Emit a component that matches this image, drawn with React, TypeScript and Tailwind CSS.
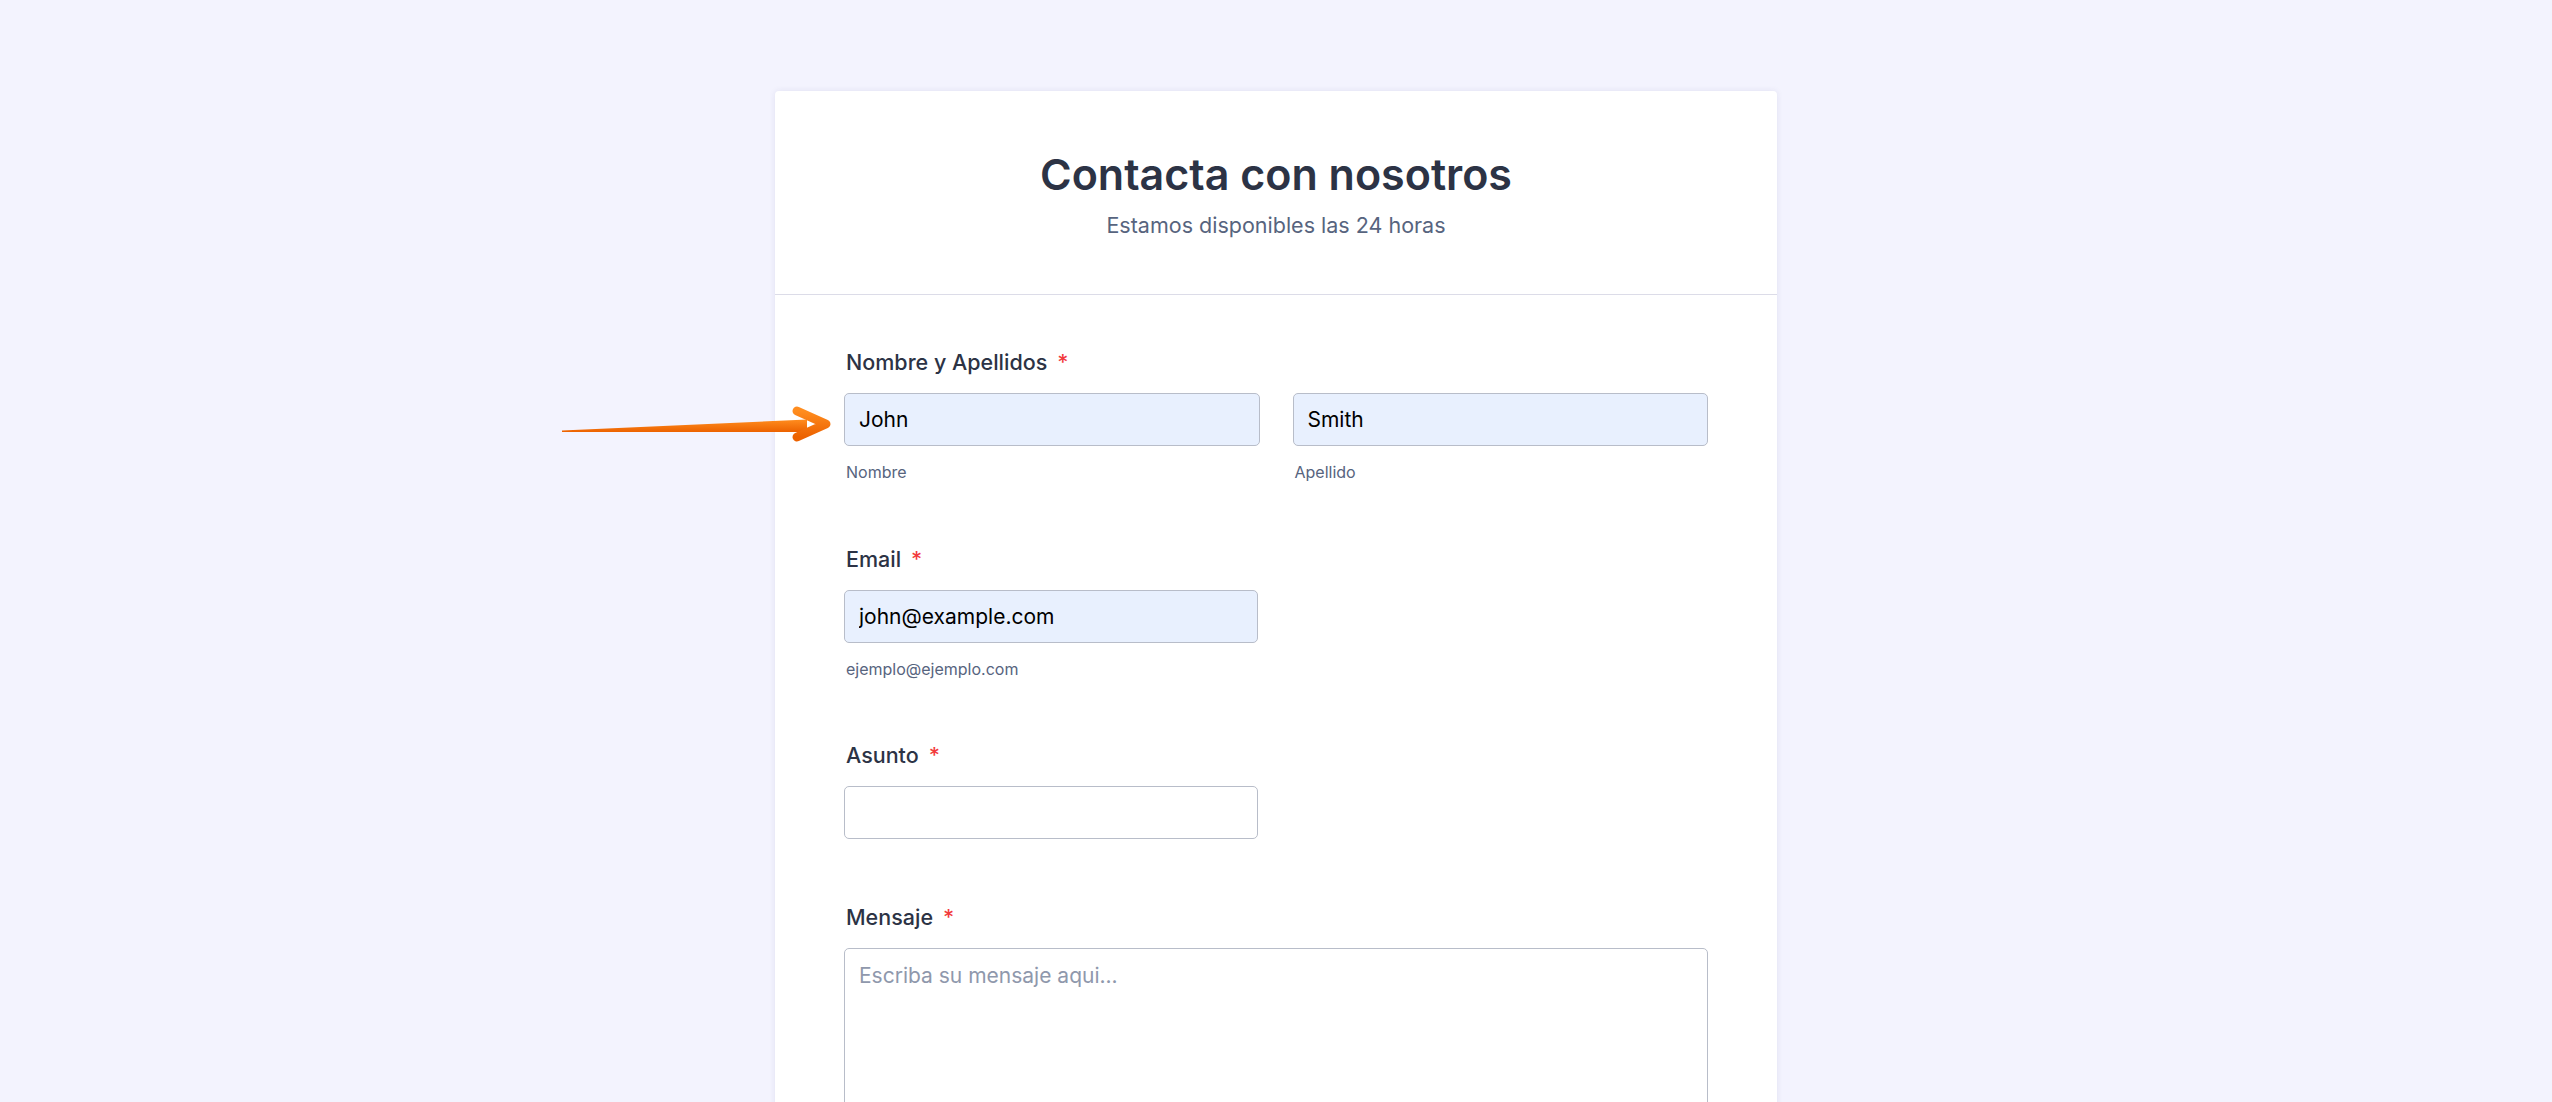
import type { ReactNode } from 'react';

const font = { fontFamily: 'Inter, "Noto Sans", sans-serif' };

function Label({ children }: { children: ReactNode }) {
  return (
    <label className="block pl-[2px] text-[21.5px] leading-[28px] font-medium text-[#2c3345]">
      {children}
      <span className="ml-[10px] text-[#f23a3c]">*</span>
    </label>
  );
}

function SubLabel({ children }: { children: ReactNode }) {
  return (
    <span className="mt-[16px] block pl-[2px] text-[16px] leading-[20px] text-[#57647e]">
      {children}
    </span>
  );
}

function TextInput({ value, filled = false }: { value?: string; filled?: boolean }) {
  return (
    <input
      type="text"
      defaultValue={value}
      className={`h-[53px] w-full rounded-[5px] border border-[#b8bdc9] px-[14px] text-[21px] text-black outline-none ${
        filled ? 'bg-[#e8f0fe]' : 'bg-white'
      }`}
    />
  );
}

// Orange pointer drawn over the page, aimed at the first name field
function PointerArrow() {
  return (
    <svg
      className="pointer-events-none absolute left-[555px] top-[400px]"
      width="290"
      height="50"
      viewBox="0 0 290 50"
    >
      <defs>
        <linearGradient id="arrowFill" x1="0" y1="0" x2="0" y2="1">
          <stop offset="0" stopColor="#ff8d1f" />
          <stop offset="1" stopColor="#ec6200" />
        </linearGradient>
      </defs>
      <polygon points="7,30.5 252,19.5 252,32 7,32" fill="url(#arrowFill)" />
      <polyline
        points="242,11 271,24 242,37"
        fill="none"
        stroke="url(#arrowFill)"
        strokeWidth="9"
        strokeLinecap="round"
        strokeLinejoin="round"
      />
    </svg>
  );
}

export default function App() {
  return (
    <div className="relative h-[1102px] overflow-hidden bg-[#f3f3fe]" style={font}>
      <div className="mx-auto mt-[91px] w-[1002px] rounded-t-[4px] bg-white shadow-[0_0_6px_rgba(42,42,108,0.09)]">
        {/* Header */}
        <div className="border-b border-[#dcdce8] pt-[57px] pb-[55px] text-center">
          <h1 className="text-[43px] leading-[52px] font-semibold text-[#2c3345]">
            Contacta con nosotros
          </h1>
          <p className="mt-[11px] text-[21.5px] leading-[28px] text-[#57647e]">
            Estamos disponibles las 24 horas
          </p>
        </div>

        {/* Fields */}
        <div className="px-[69px] pt-[53px] pb-[40px]">
          <div>
            <Label>Nombre y Apellidos</Label>
            <div className="mt-[17px] grid grid-cols-2 gap-x-[33px]">
              <div>
                <TextInput value="John" filled />
                <SubLabel>Nombre</SubLabel>
              </div>
              <div>
                <TextInput value="Smith" filled />
                <SubLabel>Apellido</SubLabel>
              </div>
            </div>
          </div>

          <div className="mt-[63px]">
            <Label>Email</Label>
            <div className="mt-[17px] w-[414px]">
              <TextInput value="john@example.com" filled />
              <SubLabel>ejemplo@ejemplo.com</SubLabel>
            </div>
          </div>

          <div className="mt-[62px]">
            <Label>Asunto</Label>
            <div className="mt-[17px] w-[414px]">
              <TextInput />
            </div>
          </div>

          <div className="mt-[64px]">
            <Label>Mensaje</Label>
            <textarea
              placeholder="Escriba su mensaje aqui..."
              className="mt-[17px] block h-[220px] w-full resize-none rounded-[5px] border border-[#b8bdc9] bg-white px-[14px] py-[13px] text-[21px] leading-[28px] text-black outline-none placeholder:text-[#8f98ac]"
            />
          </div>
        </div>
      </div>

      <PointerArrow />
    </div>
  );
}
